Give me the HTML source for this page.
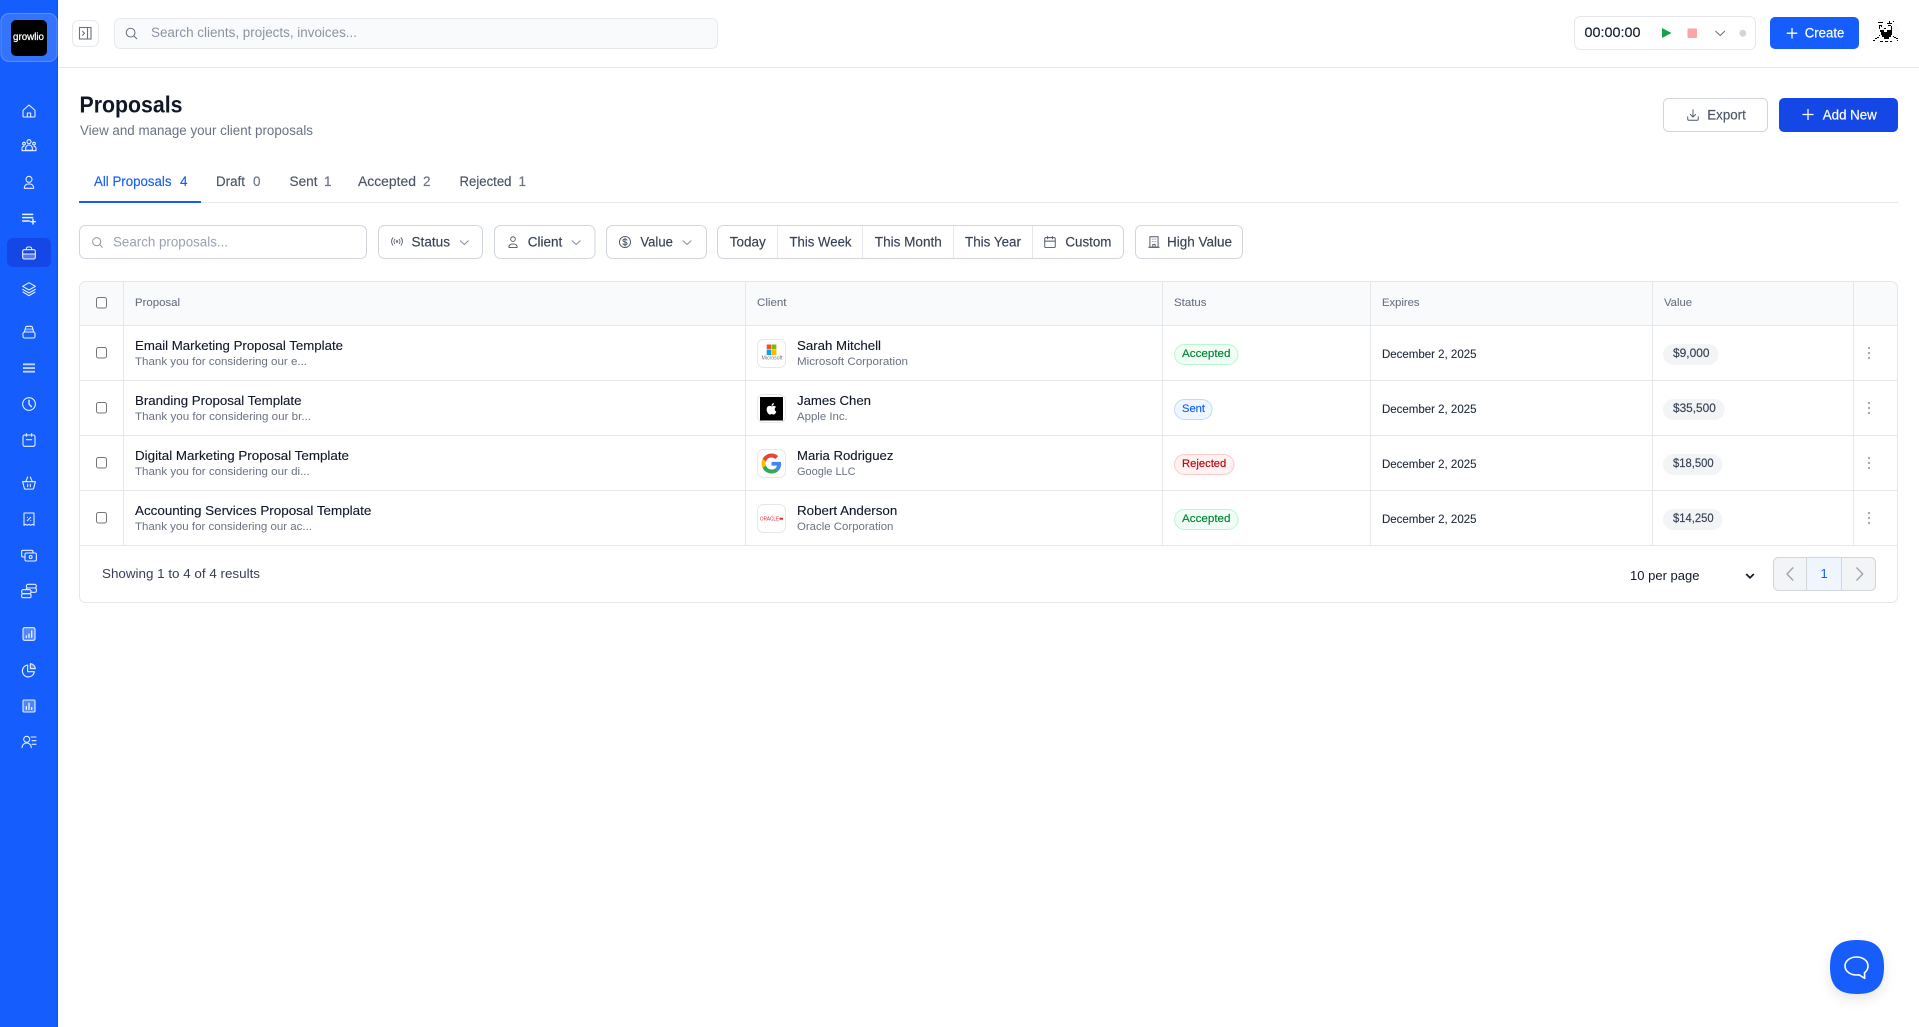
<!DOCTYPE html>
<html lang="en">
<head>
<meta charset="utf-8">
<title>Proposals</title>
<style>
html,body{margin:0;padding:0;background:#fff;width:1919px;height:1027px;overflow:hidden}
svg{display:block}
text{font-family:"Liberation Sans",Arial,sans-serif;fill:currentColor;stroke:currentColor;stroke-width:0;color:#101828;white-space:pre}
.ico{fill:none;stroke:#fff;stroke-width:1.6;stroke-linecap:round;stroke-linejoin:round;opacity:.92}
.g{fill:none;stroke:#4a5565;stroke-width:1.6;stroke-linecap:round;stroke-linejoin:round}
.l{stroke:#e5e7eb;stroke-width:1;fill:none}
.box{fill:#fff;stroke:#d1d5dc;stroke-width:1}
.ck{fill:#fff;stroke:#767676;stroke-width:1}
.f13{font-size:13.5px;color:#364153;stroke-width:.15}
.tab{font-size:13.5px;color:#4a5565;stroke-width:.15}
.th{font-size:11px;color:#6a7282;stroke-width:.1}
.nm{font-size:13px;color:#101828;stroke-width:.12}
.sb{font-size:11px;color:#6a7282}
.dt{font-size:11.5px;color:#1e2939;stroke-width:.1}
.val{font-size:11.5px;color:#364153;stroke-width:.15}
.bd{font-size:11px;stroke-width:.15}
.dot{fill:#99a1af}
</style>
</head>
<body>
<svg width="1919" height="1027" viewBox="0 0 1919 1027" xmlns="http://www.w3.org/2000/svg">
<defs>
<filter id="sh" x="-40%" y="-40%" width="180%" height="180%"><feDropShadow dx="0" dy="5" stdDeviation="6" flood-color="#000" flood-opacity=".1"/></filter>
</defs>

<!-- sidebar -->
<rect x="0" y="0" width="58" height="1027" fill="#155dfc"/>
<rect x="57" y="0" width="1" height="1027" fill="#1450e0"/>
<rect x="1" y="13.5" width="56" height="48" rx="8" fill="#3474fd" stroke="#5a8efd"/>
<rect x="11" y="20" width="36" height="36" rx="5" fill="#000"/>
<text x="13" y="40" font-size="10" lengthAdjust="spacingAndGlyphs" style="color:#fff;stroke-width:.25" textLength="31">growlio</text>
<rect x="7" y="238" width="44" height="29" rx="6" fill="#1447e6"/>

<g class="ico">
<g transform="translate(21,103) scale(.667)"><path d="M3 11 12 3l9 8v9a1 1 0 0 1-1 1H4a1 1 0 0 1-1-1z"/><path d="M9.5 21v-6h5v6"/></g>
<g transform="translate(21,137) scale(.667)"><circle cx="12" cy="7" r="3"/><circle cx="4.5" cy="10" r="2"/><circle cx="19.5" cy="10" r="2"/><path d="M7 20v-3a5 5 0 0 1 10 0v3z"/><path d="M1.5 20v-3a3 3 0 0 1 3-3"/><path d="M22.5 20v-3a3 3 0 0 0-3-3"/><path d="M1.5 20.5h21"/></g>
<g transform="translate(21,174) scale(.667)"><circle cx="12" cy="8" r="4.5"/><path d="M5 21.5v-1a5.5 5.5 0 0 1 5.5-5.500h3a5.500 5.500 0 0 1 5.500 5.500v1z"/></g>
<g transform="translate(21,210) scale(.667)"><path d="M2.500 6.500h15M2.500 11.500h15M2.500 16.500h10M18 14v7M14.500 17.500h7" stroke-width="2.200"/></g>
<g transform="translate(21,245) scale(.667)"><rect x="2.500" y="7" width="19" height="14" rx="2.500"/><path d="M8 7V5.500A2.500 2.500 0 0 1 10.500 3h3A2.500 2.500 0 0 1 16 5.500V7"/><path d="M2.500 13.500h19"/><rect x="3" y="14" width="18" height="6.500" fill="#fff" opacity=".3" stroke="none"/></g>
<g transform="translate(21,281) scale(.667)"><path d="M12 2.500 2.500 8l9.500 5.500L21.500 8z"/><path d="M2.500 12.500l9.500 5.500 9.500-5.500"/><path d="M3 16.500l9 5.500 9-5.500"/></g>
<g transform="translate(21,324) scale(.667)"><rect x="3" y="12" width="18" height="9" rx="2.500"/><path d="M5 12l2-7a2 2 0 0 1 2-1.500h6A2 2 0 0 1 17 5l2 7"/><path d="M7 8h10" stroke-width="3" opacity=".5"/></g>
<g transform="translate(21,360) scale(.667)"><path d="M3 6.500h18M3 12h18M3 17.500h18" stroke-width="2.800" stroke-linecap="butt" opacity=".8"/></g>
<g transform="translate(21,396) scale(.667)"><circle cx="12" cy="12" r="9.500"/><path d="M12 6.500V12l3.500 4" stroke-width="2"/></g>
<g transform="translate(21,432) scale(.667)"><rect x="3" y="4.500" width="18" height="17" rx="2.500"/><path d="M8 2.500v4M16 2.500v4M8 11.500h8"/></g>
<g transform="translate(21,475) scale(.667)"><path d="M2.500 10h19L19 20a1.500 1.500 0 0 1-1.500 1.200h-11A1.500 1.500 0 0 1 5 20z"/><path d="M7 10l3-7M17 10l-3-7M10 14v3.500M14 14v3.500"/></g>
<g transform="translate(21,511) scale(.667)"><path d="M4.500 3h15v18.500l-2.500-1.500-2.500 1.500-2.500-1.500-2.500 1.500-2.500-1.500-2.500 1.500z"/><path d="M9.500 14.500l5-5M9.500 9.500h.1M14.500 14.500h.1"/></g>
<g transform="translate(21,547) scale(.667)"><rect x="6" y="9" width="17" height="12" rx="2"/><path d="M18 9V7a2 2 0 0 0-2-2H3a2 2 0 0 0-2 2v6a2 2 0 0 0 2 2h3"/><circle cx="14.500" cy="15" r="2.200"/></g>
<g transform="translate(21,583) scale(.667)"><rect x="8" y="2" width="15" height="5.500" rx="2.500"/><rect x="8" y="7.500" width="15" height="6.500" rx="2"/><rect x="1" y="10" width="14" height="6" rx="2.500" fill="#155dfc"/><rect x="1" y="16" width="14" height="6" rx="2"/></g>
<g transform="translate(21,626) scale(.667)"><rect x="3" y="2.500" width="18" height="19" rx="2.500" fill="#fff" fill-opacity=".28"/><path d="M8 17v-2M12 17v-5M16 17V7.500" stroke-width="2"/></g>
<g transform="translate(21,662) scale(.667)"><path d="M10 4.500a9 9 0 1 0 10 10H10z"/><path d="M14 2.500a8 8 0 0 1 7.500 7.500H14z" fill="#fff" fill-opacity=".28"/></g>
<g transform="translate(21,698) scale(.667)"><rect x="3" y="3" width="18" height="18" rx="1.500" fill="#fff" fill-opacity=".28"/><path d="M8 17v-4M12 17V8M16 17v-2.500" stroke-width="2"/></g>
<g transform="translate(21,734) scale(.667)"><circle cx="8.500" cy="8" r="4.500"/><path d="M1.500 20.500a7 7 0 0 1 14 0"/><path d="M15 4.500h7.500M16.500 10h6M16.500 15.500h6"/></g>
</g>

<!-- topbar -->
<line class="l" x1="58" y1="67.5" x2="1919" y2="67.5"/>
<rect x="72.5" y="20.5" width="26" height="26" rx="6" fill="#fff" stroke="#e5e7eb"/>
<rect x="79.500" y="27.500" width="11.500" height="11.500" fill="none" stroke="#6a7282" stroke-width="1.100"/>
<path d="M87.500 27.500v11.500M82.200 31l2.300 2.300-2.300 2.300" fill="none" stroke="#6a7282" stroke-width="1.100"/>
<rect x="114.500" y="18.500" width="603" height="30" rx="6" fill="#f9fafb" stroke="#e5e7eb"/>
<g transform="translate(124.500,26.500) scale(.583)" fill="none" stroke="#6a7282" stroke-width="1.800" stroke-linecap="round"><circle cx="10.500" cy="10.500" r="7.500"/><path d="M21 21l-5-5"/></g>
<text x="151" y="37" font-size="13.500" lengthAdjust="spacingAndGlyphs" style="color:#8b93a1" textLength="206">Search clients, projects, invoices...</text>

<rect x="1574.500" y="16.500" width="181" height="33" rx="6" fill="#fff" stroke="#e5e7eb"/>
<text x="1584.500" y="37" font-size="13.500" lengthAdjust="spacingAndGlyphs" style="stroke-width:.15" textLength="56">00:00:00</text>
<path d="M1662 28v10l9.500-5z" fill="#16a34a"/>
<rect x="1687.500" y="28.500" width="9.500" height="9.500" rx="1" fill="#fca5a5"/>
<path d="M1715.500 31l4.700 4.500 4.700-4.500" fill="none" stroke="#6a7282" stroke-width="1.100"/>
<circle cx="1742.800" cy="33.300" r="3.500" fill="#d1d5dc"/>
<rect x="1770" y="17" width="89" height="32" rx="5" fill="#155dfc"/>
<path d="M1792 28v10.500M1786.700 33.200h10.600" stroke="#fff" stroke-width="1.300" fill="none"/>
<text x="1804.800" y="37.500" font-size="13.500" lengthAdjust="spacingAndGlyphs" style="color:#fff;stroke-width:.2" textLength="39.500">Create</text>

<!-- avatar -->
<circle cx="1885.500" cy="33.500" r="14.500" fill="#fafafa"/>
<g fill="#000" shape-rendering="crispEdges">
<rect x="1878" y="22" width="5" height="1"/><rect x="1887" y="23" width="5" height="1"/><rect x="1893" y="21" width="1" height="1"/><rect x="1889" y="21" width="1" height="2"/>
<rect x="1879" y="25" width="3" height="1"/><rect x="1888" y="25" width="3" height="1"/>
<rect x="1879" y="26" width="1" height="3"/><rect x="1881" y="26" width="1" height="1"/><rect x="1891" y="26" width="1" height="4"/>
<rect x="1884" y="28" width="2" height="1"/>
<rect x="1880" y="30" width="4" height="2"/><rect x="1887" y="30" width="5" height="2"/><rect x="1881" y="32" width="11" height="3"/><rect x="1882" y="35" width="9" height="2"/><rect x="1884" y="37" width="5" height="2"/>
<rect x="1879" y="35" width="1" height="1"/><rect x="1877" y="37" width="2" height="1"/><rect x="1875" y="38" width="2" height="1"/><rect x="1893" y="36" width="1" height="1"/><rect x="1894" y="37" width="2" height="1"/><rect x="1896" y="38" width="2" height="1"/>
<rect x="1873" y="40" width="2" height="1"/><rect x="1880" y="41" width="3" height="1"/><rect x="1885" y="41" width="3" height="1"/><rect x="1890" y="41" width="2" height="1"/><rect x="1897" y="40" width="1" height="1"/>
</g>

<!-- header -->
<text x="79.500" y="112.300" font-size="23.500" font-weight="700" lengthAdjust="spacingAndGlyphs" textLength="103">Proposals</text>
<text x="80" y="135" font-size="13.500" lengthAdjust="spacingAndGlyphs" style="color:#6a7282" textLength="233">View and manage your client proposals</text>

<rect x="1663.500" y="98.500" width="104" height="33" rx="5" class="box"/>
<g transform="translate(1686,108) scale(.583)" class="g"><path d="M12 3v12M7.500 11l4.500 4.500 4.500-4.500"/><path d="M3 15v4a2 2 0 0 0 2 2h14a2 2 0 0 0 2-2v-4"/></g>
<text x="1707.300" y="119.300" font-size="13.500" lengthAdjust="spacingAndGlyphs" style="color:#4a5565;stroke-width:.15" textLength="38.500">Export</text>
<rect x="1779" y="98" width="119" height="34" rx="5" fill="#1447e6"/>
<path d="M1808 109v11M1802.500 114.500h11" stroke="#fff" stroke-width="1.300" fill="none"/>
<text x="1822.800" y="119.300" font-size="13.500" lengthAdjust="spacingAndGlyphs" style="color:#fff;stroke-width:.2" textLength="54">Add New</text>

<!-- tabs -->
<line class="l" x1="79" y1="202.5" x2="1898" y2="202.5"/>
<rect x="79" y="201" width="122" height="2" fill="#155dfc"/>
<text x="94" y="186" class="tab" lengthAdjust="spacingAndGlyphs" style="color:#155dfc" textLength="77.500">All Proposals</text>
<text x="180" y="186" class="tab" style="color:#155dfc">4</text>
<text x="216" y="186" class="tab" lengthAdjust="spacingAndGlyphs" textLength="29">Draft</text>
<text x="253" y="186" class="tab" style="color:#6a7282">0</text>
<text x="289.500" y="186" class="tab" lengthAdjust="spacingAndGlyphs" textLength="28">Sent</text>
<text x="324" y="186" class="tab" style="color:#6a7282">1</text>
<text x="358" y="186" class="tab" lengthAdjust="spacingAndGlyphs" textLength="58">Accepted</text>
<text x="423" y="186" class="tab" style="color:#6a7282">2</text>
<text x="459.500" y="186" class="tab" lengthAdjust="spacingAndGlyphs" textLength="52">Rejected</text>
<text x="518.500" y="186" class="tab" style="color:#6a7282">1</text>

<!-- filters -->
<rect x="79.500" y="225.500" width="287" height="33" rx="6" class="box"/>
<g transform="translate(91,236) scale(.54)" fill="none" stroke="#8b93a1" stroke-width="1.800" stroke-linecap="round"><circle cx="10.500" cy="10.500" r="7.500"/><path d="M21 21l-5-5"/></g>
<text x="113" y="246.300" font-size="13.500" lengthAdjust="spacingAndGlyphs" style="color:#99a1af" textLength="115">Search proposals...</text>

<rect x="378.500" y="225.500" width="104" height="33" rx="6" class="box"/>
<g transform="translate(390.500,235) scale(.54)" class="g" stroke-width="2"><circle cx="12" cy="12" r="1.500"/><path d="M8 8a6 6 0 0 0 0 8M16 8a6 6 0 0 1 0 8M4.500 5a11 11 0 0 0 0 14M19.500 5a11 11 0 0 1 0 14"/></g>
<text x="411.500" y="246.300" class="f13" lengthAdjust="spacingAndGlyphs" textLength="38.500">Status</text>
<path d="M460 240.500l4.300 4 4.300-4" fill="none" stroke="#8b93a1" stroke-width="1.100"/>

<rect x="494.500" y="225.500" width="100.500" height="33" rx="6" class="box"/>
<g transform="translate(506,235) scale(.583)" class="g"><circle cx="12" cy="7" r="4"/><path d="M5 21.500v-1a5 5 0 0 1 5-5h4a5 5 0 0 1 5 5v1z"/></g>
<text x="527.800" y="246.300" class="f13" lengthAdjust="spacingAndGlyphs" textLength="34.500">Client</text>
<path d="M571.800 240.500l4.300 4 4.300-4" fill="none" stroke="#8b93a1" stroke-width="1.100"/>

<rect x="606.500" y="225.500" width="100" height="33" rx="6" class="box"/>
<g transform="translate(618,235) scale(.583)" class="g"><circle cx="12" cy="12" r="9.500"/><path d="M15.500 9c-.5-1.500-2-2-3.500-2-2 0-3.500 1-3.500 2.500 0 3.500 7 1.500 7 5 0 1.500-1.500 2.500-3.500 2.500-1.500 0-3-.5-3.500-2M12 5v14"/></g>
<text x="640.400" y="246.300" class="f13" lengthAdjust="spacingAndGlyphs" textLength="32.500">Value</text>
<path d="M682.700 240.500l4.300 4 4.300-4" fill="none" stroke="#8b93a1" stroke-width="1.100"/>

<rect x="717.500" y="225.500" width="406" height="33" rx="6" class="box"/>
<path d="M777.500 226v32M862.500 226v32M953.500 226v32M1032.500 226v32" stroke="#e5e7eb" fill="none"/>
<text x="729.800" y="246.300" class="f13" lengthAdjust="spacingAndGlyphs" textLength="36">Today</text>
<text x="789.500" y="246.300" class="f13" lengthAdjust="spacingAndGlyphs" textLength="62">This Week</text>
<text x="874.800" y="246.300" class="f13" lengthAdjust="spacingAndGlyphs" textLength="67">This Month</text>
<text x="965" y="246.300" class="f13" lengthAdjust="spacingAndGlyphs" textLength="56">This Year</text>
<g transform="translate(1043,235) scale(.583)" class="g"><rect x="3" y="4.500" width="18" height="17" rx="2"/><path d="M8 2.500v4M16 2.500v4M3 10.500h18"/></g>
<text x="1065.400" y="246.300" class="f13" lengthAdjust="spacingAndGlyphs" textLength="46">Custom</text>

<rect x="1135.500" y="225.500" width="107" height="33" rx="6" class="box"/>
<g transform="translate(1147,235) scale(.583)" class="g"><rect x="5" y="3" width="14" height="18"/><path d="M3 21h18M9 7h.01M12 7h.01M15 7h.01M9 11h.01M12 11h.01M15 11h.01M10 21v-5h4v5"/></g>
<text x="1167" y="246.300" class="f13" lengthAdjust="spacingAndGlyphs" textLength="65">High Value</text>

<!-- table -->
<path d="M80 325V287a5 5 0 0 1 5-5H1892a5 5 0 0 1 5 5V325z" fill="#f9fafb"/>
<rect x="79.500" y="281.500" width="1818" height="321" rx="6" class="l"/>
<path class="l" d="M80 325.500h1817M80 380.500h1817M80 435.500h1817M80 490.500h1817M80 545.500h1817"/>
<path class="l" d="M123.500 282v263M745.500 282v263M1162.500 282v263M1370.500 282v263M1652.500 282v263M1853.500 282v263"/>

<rect x="96.500" y="297.500" width="10" height="10.500" rx="2" class="ck"/>
<text x="135" y="306" class="th" lengthAdjust="spacingAndGlyphs" textLength="45">Proposal</text>
<text x="757" y="306" class="th" lengthAdjust="spacingAndGlyphs" textLength="29.500">Client</text>
<text x="1174" y="306" class="th" lengthAdjust="spacingAndGlyphs" textLength="32.500">Status</text>
<text x="1382" y="306" class="th" lengthAdjust="spacingAndGlyphs" textLength="37.500">Expires</text>
<text x="1664" y="306" class="th" lengthAdjust="spacingAndGlyphs" textLength="28">Value</text>

<!-- row 1 -->
<rect x="96.500" y="347.500" width="10" height="10.500" rx="2" class="ck"/>
<text x="135" y="350" class="nm" lengthAdjust="spacingAndGlyphs" textLength="208">Email Marketing Proposal Template</text>
<text x="135" y="365" class="sb" lengthAdjust="spacingAndGlyphs" textLength="172">Thank you for considering our e...</text>
<rect x="757.500" y="339.500" width="28" height="28" rx="6" fill="#fff" stroke="#e5e7eb"/>
<rect x="766.700" y="344.500" width="4.600" height="5" fill="#f25022"/><rect x="771.800" y="344.500" width="4.600" height="5" fill="#7fba00"/><rect x="766.700" y="350" width="4.600" height="5" fill="#00a4ef"/><rect x="771.800" y="350" width="4.600" height="5" fill="#ffb900"/>
<text x="761.500" y="359.500" font-size="5.500" style="color:#737373" lengthAdjust="spacingAndGlyphs" textLength="21">Microsoft</text>
<text x="797" y="350" class="nm" lengthAdjust="spacingAndGlyphs" textLength="84">Sarah Mitchell</text>
<text x="797" y="365" class="sb" lengthAdjust="spacingAndGlyphs" textLength="111">Microsoft Corporation</text>
<rect x="1174.500" y="344.500" width="63.500" height="20" rx="10" fill="#f0fdf4" stroke="#b9f8cf"/>
<text x="1182" y="357" class="bd" style="color:#008236" lengthAdjust="spacingAndGlyphs" textLength="48.500">Accepted</text>
<text x="1382" y="358" class="dt" lengthAdjust="spacingAndGlyphs" textLength="94.500">December 2, 2025</text>
<rect x="1663" y="344" width="55.500" height="21" rx="10.500" fill="#f3f4f6"/>
<text x="1673" y="357" class="val" lengthAdjust="spacingAndGlyphs" textLength="36.500">$9,000</text>
<circle class="dot" cx="1869" cy="348" r="1.100"/><circle class="dot" cx="1869" cy="353" r="1.100"/><circle class="dot" cx="1869" cy="358" r="1.100"/>

<!-- row 2 -->
<rect x="96.500" y="402.500" width="10" height="10.500" rx="2" class="ck"/>
<text x="135" y="405" class="nm" lengthAdjust="spacingAndGlyphs" textLength="166.500">Branding Proposal Template</text>
<text x="135" y="420" class="sb" lengthAdjust="spacingAndGlyphs" textLength="176">Thank you for considering our br...</text>
<rect x="757.500" y="394.500" width="28" height="28" rx="6" fill="#fff" stroke="#e5e7eb"/>
<rect x="760" y="397" width="23" height="23.500" fill="#000"/>
<path transform="translate(763.800,401.200) scale(.64)" fill="#fff" d="M17.050 20.280c-.98.950-2.050.8-3.080.350-1.090-.460-2.090-.480-3.240 0-1.440.620-2.200.440-3.060-.350C2.790 15.250 3.510 7.590 9.050 7.310c1.350.070 2.290.740 3.080.8 1.180-.240 2.310-.930 3.570-.840 1.510.120 2.650.720 3.400 1.800-3.120 1.870-2.380 5.980.480 7.130-.570 1.500-1.310 2.990-2.540 4.090zM12.030 7.250c-.150-2.230 1.660-4.070 3.740-4.250.290 2.580-2.340 4.500-3.740 4.250z"/>
<text x="797" y="405" class="nm" lengthAdjust="spacingAndGlyphs" textLength="74">James Chen</text>
<text x="797" y="420" class="sb" lengthAdjust="spacingAndGlyphs" textLength="50.700">Apple Inc.</text>
<rect x="1174.500" y="399.500" width="37.500" height="20" rx="10" fill="#eff6ff" stroke="#bedbff"/>
<text x="1182" y="412" class="bd" style="color:#155dfc" lengthAdjust="spacingAndGlyphs" textLength="23">Sent</text>
<text x="1382" y="413" class="dt" lengthAdjust="spacingAndGlyphs" textLength="94.500">December 2, 2025</text>
<rect x="1663" y="399" width="62" height="21" rx="10.500" fill="#f3f4f6"/>
<text x="1673" y="412" class="val" lengthAdjust="spacingAndGlyphs" textLength="42.800">$35,500</text>
<circle class="dot" cx="1869" cy="403" r="1.100"/><circle class="dot" cx="1869" cy="408" r="1.100"/><circle class="dot" cx="1869" cy="413" r="1.100"/>

<!-- row 3 -->
<rect x="96.500" y="457.500" width="10" height="10.500" rx="2" class="ck"/>
<text x="135" y="460" class="nm" lengthAdjust="spacingAndGlyphs" textLength="214">Digital Marketing Proposal Template</text>
<text x="135" y="475" class="sb" lengthAdjust="spacingAndGlyphs" textLength="174.700">Thank you for considering our di...</text>
<rect x="757.500" y="449.500" width="28" height="28" rx="6" fill="#fff" stroke="#e5e7eb"/>
<g transform="translate(761.500,453.500) scale(.417)">
<path fill="#EA4335" d="M24 9.500c3.540 0 6.710 1.220 9.210 3.600l6.850-6.850C35.900 2.380 30.470 0 24 0 14.620 0 6.510 5.380 2.560 13.220l7.980 6.190C12.430 13.720 17.740 9.500 24 9.500z"/>
<path fill="#4285F4" d="M46.980 24.550c0-1.570-.150-3.090-.380-4.550H24v9.020h12.940c-.580 2.960-2.260 5.480-4.780 7.180l7.730 6c4.510-4.180 7.090-10.360 7.090-17.650z"/>
<path fill="#FBBC05" d="M10.530 28.590c-.480-1.450-.760-2.990-.760-4.590s.270-3.140.760-4.590l-7.980-6.190C.920 16.460 0 20.120 0 24c0 3.880.920 7.540 2.560 10.780l7.970-6.190z"/>
<path fill="#34A853" d="M24 48c6.480 0 11.930-2.130 15.890-5.810l-7.730-6c-2.150 1.450-4.920 2.300-8.160 2.300-6.260 0-11.570-4.220-13.470-9.910l-7.980 6.190C6.510 42.620 14.620 48 24 48z"/>
</g>
<text x="797" y="460" class="nm" lengthAdjust="spacingAndGlyphs" textLength="96.400">Maria Rodriguez</text>
<text x="797" y="475" class="sb" lengthAdjust="spacingAndGlyphs" textLength="58.600">Google LLC</text>
<rect x="1174.500" y="454.500" width="59.500" height="20" rx="10" fill="#fef2f2" stroke="#ffc9c9"/>
<text x="1182" y="467" class="bd" style="color:#c10007" lengthAdjust="spacingAndGlyphs" textLength="44.300">Rejected</text>
<text x="1382" y="468" class="dt" lengthAdjust="spacingAndGlyphs" textLength="94.500">December 2, 2025</text>
<rect x="1663" y="454" width="59.500" height="21" rx="10.500" fill="#f3f4f6"/>
<text x="1673" y="467" class="val" lengthAdjust="spacingAndGlyphs" textLength="40.600">$18,500</text>
<circle class="dot" cx="1869" cy="458" r="1.100"/><circle class="dot" cx="1869" cy="463" r="1.100"/><circle class="dot" cx="1869" cy="468" r="1.100"/>

<!-- row 4 -->
<rect x="96.500" y="512.500" width="10" height="10.500" rx="2" class="ck"/>
<text x="135" y="515" class="nm" lengthAdjust="spacingAndGlyphs" textLength="236.300">Accounting Services Proposal Template</text>
<text x="135" y="530" class="sb" lengthAdjust="spacingAndGlyphs" textLength="177">Thank you for considering our ac...</text>
<rect x="757.500" y="504.500" width="28" height="28" rx="6" fill="#fff" stroke="#e5e7eb"/>
<text x="760" y="520.700" font-size="5.500" style="color:#e3262e" lengthAdjust="spacingAndGlyphs" textLength="19">ORACLE</text>
<rect x="779.500" y="517.700" width="3.500" height="2" fill="#e3262e"/>
<text x="797" y="515" class="nm" lengthAdjust="spacingAndGlyphs" textLength="100.300">Robert Anderson</text>
<text x="797" y="530" class="sb" lengthAdjust="spacingAndGlyphs" textLength="96.400">Oracle Corporation</text>
<rect x="1174.500" y="509.500" width="63.500" height="20" rx="10" fill="#f0fdf4" stroke="#b9f8cf"/>
<text x="1182" y="522" class="bd" style="color:#008236" lengthAdjust="spacingAndGlyphs" textLength="48.500">Accepted</text>
<text x="1382" y="523" class="dt" lengthAdjust="spacingAndGlyphs" textLength="94.500">December 2, 2025</text>
<rect x="1663" y="509" width="59.500" height="21" rx="10.500" fill="#f3f4f6"/>
<text x="1673" y="522" class="val" lengthAdjust="spacingAndGlyphs" textLength="40.600">$14,250</text>
<circle class="dot" cx="1869" cy="513" r="1.100"/><circle class="dot" cx="1869" cy="518" r="1.100"/><circle class="dot" cx="1869" cy="523" r="1.100"/>

<!-- footer -->
<text x="102" y="577.800" font-size="12.500" style="color:#364153" lengthAdjust="spacingAndGlyphs" textLength="158">Showing 1 to 4 of 4 results</text>
<text x="1630" y="580" font-size="13" lengthAdjust="spacingAndGlyphs" textLength="69.500">10 per page</text>
<path d="M1746.200 574l3.800 3.800 3.800-3.800" fill="none" stroke="#101828" stroke-width="1.700"/>
<rect x="1773.500" y="557.500" width="102" height="33" rx="5" fill="#f3f4f6" stroke="#d1d5dc"/>
<rect x="1806.500" y="558" width="35" height="32" fill="#eff6ff"/>
<path d="M1806.500 558v32M1841.500 558v32" stroke="#d1d5dc" fill="none"/>
<path d="M1793.200 567.500l-6.200 6.500 6.200 6.500" fill="none" stroke="#99a1af" stroke-width="1.300"/>
<text x="1820.500" y="578" font-size="13" style="color:#155dfc">1</text>
<path d="M1856.500 567.500l6.200 6.500-6.200 6.500" fill="none" stroke="#99a1af" stroke-width="1.300"/>

<!-- chat -->
<g transform="translate(1830,940)">
<path filter="url(#sh)" fill="#155dfc" d="M27 0C46 0 54 8 54 27 54 46 46 54 27 54 8 54 0 46 0 27 0 8 8 0 27 0Z"/>
<path fill="none" stroke="#fff" stroke-width="1.600" stroke-linejoin="round" d="M26.500 17c6.500 0 11.500 3.800 11.500 9 0 3-1.300 5.200-3.500 6.800l.2 5.500-5.700-3.500c-.9.200-1.600.2-2.500.2-6.500 0-11.500-4-11.500-9s5-9 11.500-9z"/>
</g>
</svg>
</body>
</html>
